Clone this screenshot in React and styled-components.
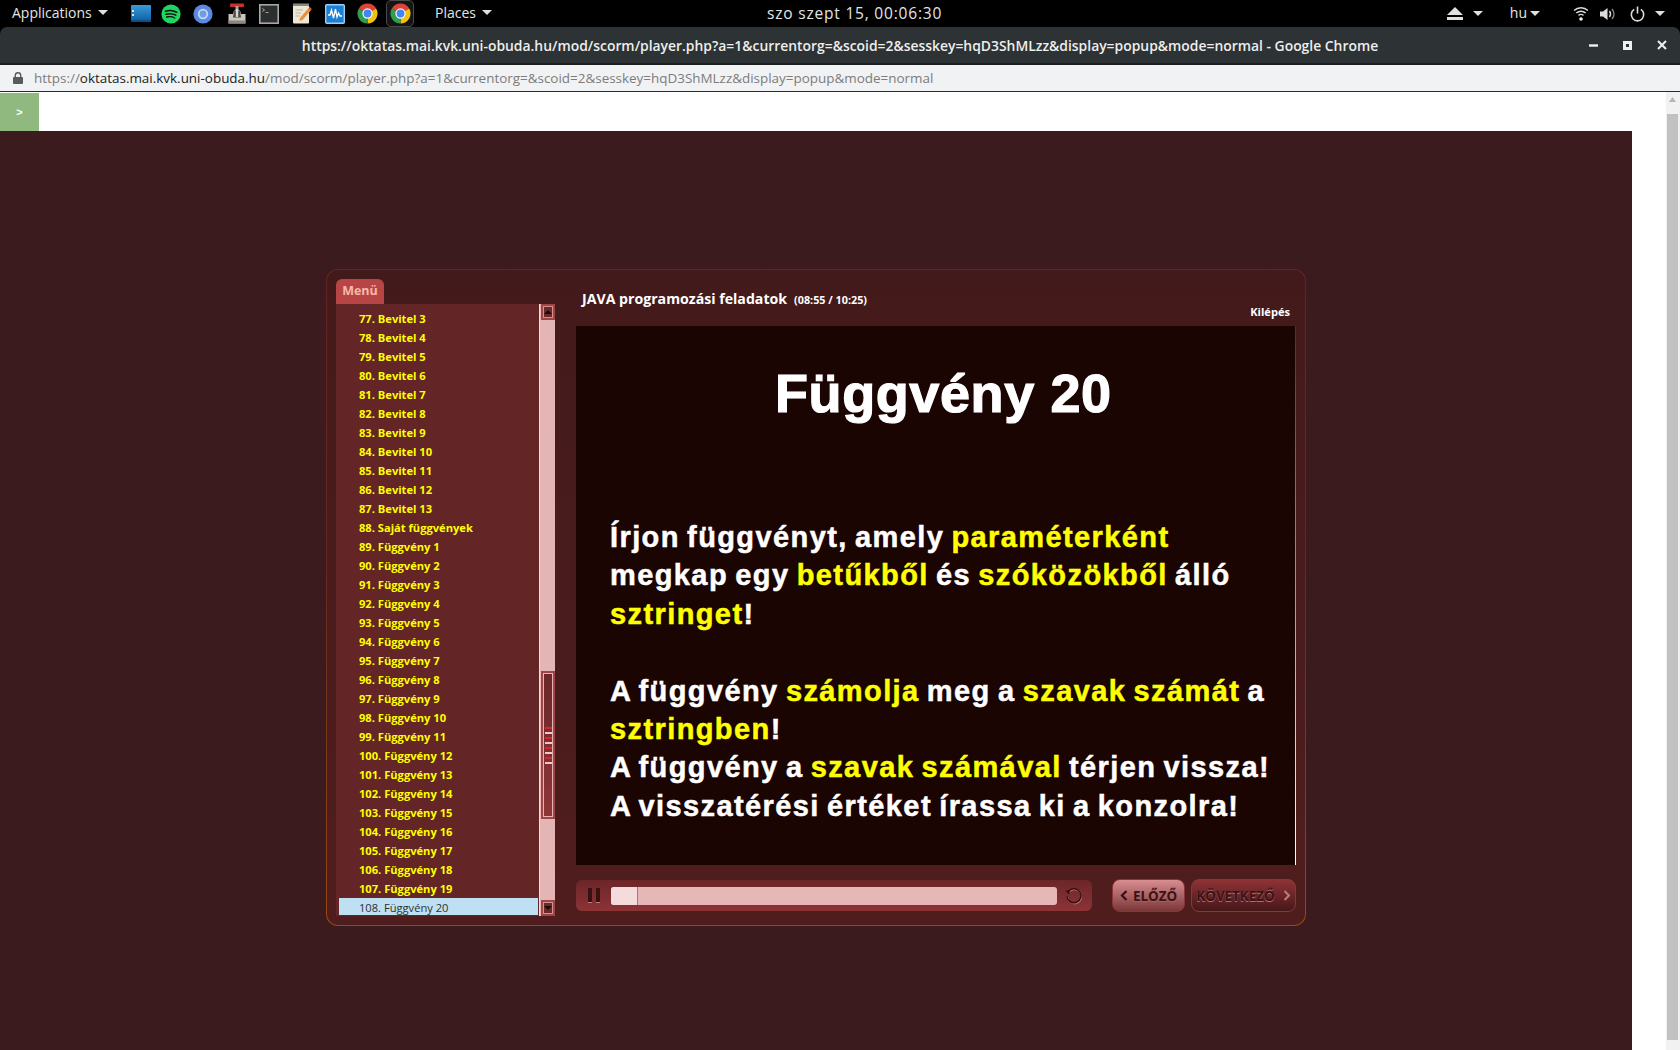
import styled, { createGlobalStyle } from "styled-components";

const GlobalStyle = createGlobalStyle`
    html, body {
        margin: 0;
        padding: 0;
        height: 100%;
        overflow: hidden;
        background: #ffffff;
    }
    * { box-sizing: border-box; }
`

const bevitel = Array.from({ length: 11 }, (_, i) => `${77 + i}. Bevitel ${3 + i}`)
const fuggveny = Array.from({ length: 19 }, (_, i) => `${89 + i}. Függvény ${1 + i}`)
const menuItems = [...bevitel, "88. Saját függvények", ...fuggveny]

function ChromeIcon() {
    return (
        <svg width="21" height="21" viewBox="0 0 20 20">
            <path d="M10 10 L1.77 5.25 A9.5 9.5 0 0 1 18.23 5.25 Z" fill="#db4437" />
            <path d="M10 10 L18.23 5.25 A9.5 9.5 0 0 1 10 19.5 Z" fill="#f4c20d" />
            <path d="M10 10 L10 19.5 A9.5 9.5 0 0 1 1.77 5.25 Z" fill="#2f9e4f" />
            <circle cx="10" cy="10" r="4.9" fill="#f4f4f4" />
            <circle cx="10" cy="10" r="3.7" fill="#4285f4" />
        </svg>
    )
}

function DockIcons() {
    return (
        <Dock>
            <DockSlot $w={30}>
                <svg width="20" height="17" viewBox="0 0 20 17">
                    <defs>
                        <linearGradient id="filesBlue" x1="0" y1="0" x2="0" y2="1">
                            <stop offset="0" stopColor="#3a9bdc" />
                            <stop offset="1" stopColor="#0f5c9e" />
                        </linearGradient>
                    </defs>
                    <rect width="20" height="17" rx="1" fill="url(#filesBlue)" />
                    <rect width="20" height="1" y="15.5" fill="#0b3f6d" />
                    <rect x="1" y="5" width="2" height="2" fill="#cfe8ff" />
                    <rect x="1" y="9" width="2" height="2" fill="#cfe8ff" />
                </svg>
            </DockSlot>
            <DockSlot $w={30}>
                <svg width="20" height="20" viewBox="0 0 20 20">
                    <circle cx="10" cy="10" r="9.6" fill="#1ed760" />
                    <path d="M4.5 7.2 C8 6.2 12.5 6.4 15.6 8.2" stroke="#101010" strokeWidth="1.7" fill="none" strokeLinecap="round" />
                    <path d="M5 10.2 C8.2 9.4 12 9.6 14.8 11.2" stroke="#101010" strokeWidth="1.5" fill="none" strokeLinecap="round" />
                    <path d="M5.6 13 C8.3 12.4 11.4 12.6 13.8 14" stroke="#101010" strokeWidth="1.3" fill="none" strokeLinecap="round" />
                </svg>
            </DockSlot>
            <DockSlot $w={34}>
                <svg width="20" height="20" viewBox="0 0 20 20">
                    <circle cx="10" cy="10" r="9.6" fill="#5b8be0" />
                    <circle cx="10" cy="10" r="5.2" fill="#c4d6f3" />
                    <circle cx="10" cy="10" r="3.4" fill="#6f9ce8" />
                </svg>
            </DockSlot>
            <DockSlot $w={33}>
                <svg width="20" height="21" viewBox="0 0 20 21">
                    <rect x="3" y="0.5" width="14" height="3.4" rx="1" fill="#c8302c" />
                    <rect x="8.5" y="3" width="3" height="6" fill="#a9a49b" />
                    <path d="M1.5 11 H6 L7 7.5 H13 L14 11 H18.5 V20.5 H1.5 Z" fill="#c9c5bd" />
                    <path d="M7 8 H13 L14 14.5 H6 Z" fill="#4a4643" />
                    <rect x="8.8" y="6" width="2.4" height="8" fill="#d9d5cd" />
                    <rect x="1.5" y="17.5" width="17" height="3" fill="#8b8780" />
                </svg>
            </DockSlot>
            <DockSlot $w={32}>
                <svg width="20" height="20" viewBox="0 0 20 20">
                    <rect x="0.8" y="0.8" width="18.4" height="18.4" fill="#2b2f30" stroke="#a5a8a6" strokeWidth="1.6" />
                    <path d="M3.5 4.5 L5.5 6 L3.5 7.5" stroke="#c8c8c8" strokeWidth="0.8" fill="none" />
                    <rect x="6.5" y="8" width="3" height="1" fill="#a0a0a0" />
                </svg>
            </DockSlot>
            <DockSlot $w={33}>
                <svg width="20" height="21" viewBox="0 0 20 21">
                    <rect x="1" y="1.5" width="16" height="19" rx="1" fill="#ece7d6" />
                    <rect x="1" y="0.5" width="16" height="2.5" fill="#8a8780" />
                    <path d="M3.5 7 H11 M3.5 10 H9 M3.5 13 H8" stroke="#bbb59f" strokeWidth="1" />
                    <path d="M8 15 L16.5 5 L19 7.2 L10.5 17 L7.5 18 Z" fill="#e8923a" />
                    <path d="M16.5 5 L19 7.2 L19.8 6 L17.6 3.8 Z" fill="#d25e4a" />
                </svg>
            </DockSlot>
            <DockSlot $w={33}>
                <svg width="20" height="20" viewBox="0 0 20 20">
                    <rect x="0.7" y="0.7" width="18.6" height="18.6" rx="1" fill="#1c7fd6" stroke="#9ad0f5" strokeWidth="1.4" />
                    <path d="M3 11 H5 L6.5 6 L8.5 14 L10.5 5 L12 13 L13.5 9 L15 12 H17" stroke="#ffffff" strokeWidth="1.3" fill="none" />
                </svg>
            </DockSlot>
            <DockSlot $w={33}>
                <ChromeIcon />
            </DockSlot>
            <ActiveSlot>
                <ChromeIcon />
            </ActiveSlot>
        </Dock>
    )
}

function App() {
    return (
        <Screen>
            <GlobalStyle />
            <TopBar>
                <MenuLabel>Applications<Caret /></MenuLabel>
                <DockIcons />
                <PlacesLabel>Places<Caret /></PlacesLabel>
                <Clock>szo szept 15, 00:06:30</Clock>
                <TrayGroup>
                    <svg width="16" height="13" viewBox="0 0 16 13">
                        <path d="M8 0 L16 8 H0 Z M0 10 H16 V13 H0 Z" fill="#e0e0e0" />
                    </svg>
                    <TrayCaret $left={10} />
                    <HuLabel>hu</HuLabel>
                    <TrayCaret $left={3} />
                    <TrayIcon $left={33}>
                        <svg width="16" height="15" viewBox="0 0 16 15">
                            <path d="M1 4.5 C5 0.8 11 0.8 15 4.5 M3.3 7 C6 4.6 10 4.6 12.7 7 M5.5 9.4 C7 8.2 9 8.2 10.5 9.4" stroke="#dcdcdc" strokeWidth="1.4" fill="none" />
                            <circle cx="8" cy="13" r="1.8" fill="#f0f0f0" />
                        </svg>
                    </TrayIcon>
                    <TrayIcon $left={11}>
                        <svg width="15" height="14" viewBox="0 0 15 14">
                            <path d="M0 4.5 H3 L7.5 1 V13 L3 9.5 H0 Z" fill="#dcdcdc" />
                            <path d="M9.5 4 C10.8 5.8 10.8 8.2 9.5 10" stroke="#dcdcdc" strokeWidth="1.4" fill="none" />
                            <path d="M12 2 C14.4 5 14.4 9 12 12" stroke="#8a8a8a" strokeWidth="1.3" fill="none" />
                        </svg>
                    </TrayIcon>
                    <TrayIcon $left={15}>
                        <svg width="15" height="16" viewBox="0 0 15 16">
                            <path d="M4.2 3.4 A6.2 6.2 0 1 0 10.8 3.4" stroke="#dcdcdc" strokeWidth="1.6" fill="none" />
                            <path d="M7.5 0.5 V7.5" stroke="#dcdcdc" strokeWidth="1.6" />
                        </svg>
                    </TrayIcon>
                    <TrayCaret $left={10} />
                </TrayGroup>
            </TopBar>

            <TitleBar>
                <span />
                <WindowTitle>https://oktatas.mai.kvk.uni-obuda.hu/mod/scorm/player.php?a=1&amp;currentorg=&amp;scoid=2&amp;sesskey=hqD3ShMLzz&amp;display=popup&amp;mode=normal - Google Chrome</WindowTitle>
                <WindowButtons>
                    <svg width="9" height="3" viewBox="0 0 9 3"><rect width="9" height="2.4" y="0.3" fill="#f0f0f0" /></svg>
                    <svg width="9" height="9" viewBox="0 0 9 9"><path fillRule="evenodd" d="M0 0 H9 V9 H0 Z M3 3 V6 H6 V3 Z" fill="#f0f0f0" /></svg>
                    <svg width="10" height="10" viewBox="0 0 10 10"><path d="M1 1 L9 9 M9 1 L1 9" stroke="#f0f0f0" strokeWidth="2" /></svg>
                </WindowButtons>
            </TitleBar>

            <AddressBar>
                <svg width="10" height="12" viewBox="0 0 10 12">
                    <rect y="5" width="10" height="7" rx="1" fill="#5a5a5a" />
                    <path d="M2.3 5.5 V3.4 A2.7 2.7 0 0 1 7.7 3.4 V5.5" stroke="#5a5a5a" strokeWidth="1.4" fill="none" />
                </svg>
                <UrlText>
                    https://<UrlHost>oktatas.mai.kvk.uni-obuda.hu</UrlHost>/mod/scorm/player.php?a=1&amp;currentorg=&amp;scoid=2&amp;sesskey=hqD3ShMLzz&amp;display=popup&amp;mode=normal
                </UrlText>
            </AddressBar>

            <Page>
                <PageColumn>
                    <ToggleRow>
                        <ToggleButton>&gt;</ToggleButton>
                    </ToggleRow>
                    <Stage>
                        <Player>
                            <Sidebar>
                                <MenuTab>Menü</MenuTab>
                                <MenuBody>
                                    <MenuList>
                                        {menuItems.map((item) => <MenuRow key={item}>{item}</MenuRow>)}
                                        <MenuRow $active>108. Függvény 20</MenuRow>
                                    </MenuList>
                                    <ListScroll>
                                        <ScrollButton>
                                            <svg width="8" height="4" viewBox="0 0 8 4"><path d="M4 0 L8 4 H0 Z" fill="#200809" /></svg>
                                        </ScrollButton>
                                        <ScrollThumb>
                                            {[0, 1, 2, 3, 4, 5, 6, 7].map((n) => <Grip key={n} $even={n % 2 === 0} />)}
                                        </ScrollThumb>
                                        <ScrollButton $bottom>
                                            <svg width="8" height="4" viewBox="0 0 8 4"><path d="M0 0 H8 L4 4 Z" fill="#200809" /></svg>
                                        </ScrollButton>
                                    </ListScroll>
                                </MenuBody>
                            </Sidebar>

                            <MainColumn>
                                <PlayerHeader>
                                    <CourseTitle>JAVA programozási feladatok<Duration>(08:55 / 10:25)</Duration></CourseTitle>
                                    <ExitLink>Kilépés</ExitLink>
                                </PlayerHeader>

                                <Slide>
                                    <SlideTitle>Függvény 20</SlideTitle>
                                    <SlideText>
                                        Írjon függvényt, amely <Mark>paraméterként</Mark><br />
                                        megkap egy <Mark>betűkből</Mark> és <Mark>szóközökből</Mark> álló<br />
                                        <Mark>sztringet</Mark>!<br />
                                        <br />
                                        A függvény <Mark>számolja</Mark> meg a <Mark>szavak számát</Mark> a<br />
                                        <Mark>sztringben</Mark>!<br />
                                        A függvény a <Mark>szavak számával</Mark> térjen vissza!<br />
                                        A visszatérési értéket írassa ki a konzolra!
                                    </SlideText>
                                </Slide>

                                <Controls>
                                    <ControlBar>
                                        <PauseIcon><PauseBar /><PauseBar /></PauseIcon>
                                        <Track><TrackFill $percent={6} /></Track>
                                        <svg width="20" height="20" viewBox="0 0 20 20">
                                            <path d="M4.6 5.2 A7 7 0 1 1 3 10.5" stroke="#c9797b" strokeWidth="1.6" fill="none" transform="translate(0.5 0.7)" />
                                            <path d="M4.6 5.2 A7 7 0 1 1 3 10.5" stroke="#35100f" strokeWidth="1.6" fill="none" />
                                            <path d="M1.5 4.6 L6.4 4.4 L4.6 8.4 Z" fill="#35100f" />
                                        </svg>
                                    </ControlBar>
                                    <NavButton $width={73} $gap={5} $light>
                                        <svg width="8" height="11" viewBox="0 0 8 11"><path d="M6.5 1 L2 5.5 L6.5 10" stroke="#3a1113" strokeWidth="2.2" fill="none" /></svg>
                                        <NavLabel $light>ELŐZŐ</NavLabel>
                                    </NavButton>
                                    <NavButton $width={105} $gap={8}>
                                        <NavLabel>KÖVETKEZŐ</NavLabel>
                                        <svg width="8" height="11" viewBox="0 0 8 11"><path d="M1.5 1 L6 5.5 L1.5 10" stroke="#c07a7c" strokeWidth="2" fill="none" /></svg>
                                    </NavButton>
                                </Controls>
                            </MainColumn>
                        </Player>
                    </Stage>
                </PageColumn>
                <PageScrollbar>
                    <svg width="7" height="5" viewBox="0 0 7 5"><path d="M3.5 0 L7 5 H0 Z" fill="#b5b5b5" /></svg>
                    <PageScrollThumb />
                </PageScrollbar>
            </Page>
        </Screen>
    )
}

export default App

const sans = `"Open Sans", "Noto Sans", sans-serif`
const arial = `"Liberation Sans", Arial, sans-serif`

const Screen = styled.div`
    width: 1680px;
    height: 1050px;
    display: flex;
    flex-direction: column;
    overflow: hidden;
    background: #000000;
    font-family: ${sans};
`

const TopBar = styled.div`
    height: 27px;
    flex: none;
    display: flex;
    align-items: center;
    padding-left: 12px;
    background: #000000;
    color: #e4e4e4;
    font-size: 14px;
`

const MenuLabel = styled.div`
    width: 114px;
    margin-top: -2px;
    display: flex;
    align-items: center;
    white-space: nowrap;
`

const PlacesLabel = styled(MenuLabel)`
    width: 74px;
    margin-left: 21px;
`

const Caret = styled.span`
    margin-left: 6px;
    border-left: 5px solid transparent;
    border-right: 5px solid transparent;
    border-top: 5px solid #e0e0e0;
`

const Dock = styled.div`
    display: flex;
    align-items: center;
    height: 27px;
`

const DockSlot = styled.div`
    width: ${props => props.$w}px;
    height: 27px;
    display: flex;
    align-items: center;
    justify-content: center;
`

const ActiveSlot = styled.div`
    width: 28px;
    height: 27px;
    margin-left: 2px;
    display: flex;
    align-items: center;
    justify-content: center;
    background: #151515;
    border: 1px solid #4a4a4a;
    border-radius: 5px;
`

const Clock = styled.div`
    margin-left: 258px;
    margin-top: -2px;
    font-size: 15.5px;
    letter-spacing: 0.8px;
    white-space: nowrap;
`

const TrayGroup = styled.div`
    margin-left: auto;
    padding-right: 15px;
    display: flex;
    align-items: center;
`

const TrayCaret = styled(Caret)`
    margin-left: ${props => props.$left}px;
`

const HuLabel = styled.span`
    margin-left: 27px;
    margin-top: -2px;
    font-size: 14px;
`

const TrayIcon = styled.span`
    margin-left: ${props => props.$left}px;
    display: flex;
`

const TitleBar = styled.div`
    height: 37px;
    flex: none;
    display: grid;
    grid-template-columns: 1fr auto 1fr;
    align-items: center;
    background: #2d3235;
    border-radius: 7px 7px 0 0;
    border-bottom: 1px solid #1c1f20;
`

const WindowTitle = styled.div`
    color: #eeeeec;
    font-size: 13.9px;
    font-weight: 600;
    white-space: nowrap;
`

const WindowButtons = styled.div`
    display: flex;
    justify-content: flex-end;
    align-items: center;
    gap: 25px;
    padding-right: 13px;
`

const AddressBar = styled.div`
    height: 28px;
    flex: none;
    display: flex;
    align-items: center;
    gap: 11px;
    padding-left: 13px;
    background: #f1f2f4;
    border-top: 1px solid #1c1f20;
    border-bottom: 1px solid #2a2a2a;
`

const UrlText = styled.div`
    font-size: 13.45px;
    color: #7c7c7c;
    white-space: nowrap;
`

const UrlHost = styled.span`
    color: #222222;
`

const Page = styled.div`
    flex: 1;
    display: flex;
    background: #ffffff;
    min-height: 0;
`

const PageColumn = styled.div`
    width: 1632px;
    display: flex;
    flex-direction: column;
`

const ToggleRow = styled.div`
    height: 39px;
    flex: none;
    padding-top: 1px;
    background: #ffffff;
`

const ToggleButton = styled.div`
    width: 39px;
    height: 38px;
    display: flex;
    align-items: center;
    justify-content: center;
    background: #8fb97e;
    color: #ffffff;
    font-family: ${arial};
    font-size: 11px;
    font-weight: 700;
`

const Stage = styled.div`
    flex: 1;
    padding: 138px 0 0 326px;
    background: #3b1b1e;
`

const Player = styled.div`
    width: 980px;
    height: 657px;
    display: flex;
    gap: 21px;
    padding: 9px 9px 0 9px;
    border: 1px solid transparent;
    border-radius: 12px;
    background:
        linear-gradient(#431a1b, #501d1e) padding-box,
        linear-gradient(#672324, #6b2a1c 50%, #9a4a10) border-box;
`

const Sidebar = styled.div`
    width: 219px;
    flex: none;
    display: flex;
    flex-direction: column;
`

const MenuTab = styled.div`
    width: 48px;
    height: 25px;
    padding-bottom: 2px;
    display: flex;
    align-items: center;
    justify-content: center;
    background: #b74546;
    border-radius: 6px 6px 0 0;
    color: #f8b9a8;
    font-size: 12.5px;
    font-weight: 700;
`

const MenuBody = styled.div`
    height: 612px;
    display: flex;
`

const MenuList = styled.div`
    width: 203px;
    padding: 5px 0 0 3px;
    background: #642527;
`

const MenuRow = styled.div`
    width: 199px;
    height: 17px;
    margin-bottom: 2px;
    padding: 1px 0 0 20px;
    display: flex;
    align-items: center;
    background: ${props => props.$active ? "#bfe0f2" : "transparent"};
    color: ${props => props.$active ? "#2e2e2e" : "#ffff00"};
    font-size: 11.15px;
    font-weight: ${props => props.$active ? 400 : 700};
    white-space: nowrap;
`

const ListScroll = styled.div`
    width: 16px;
    display: flex;
    flex-direction: column;
    padding-left: 1px;
    background: #e3b5b5;
    border-left: 1px solid #f3dede;
`

const ScrollButton = styled.div`
    height: 16px;
    flex: none;
    margin-top: ${props => props.$bottom ? "auto" : "0"};
    display: flex;
    align-items: center;
    justify-content: center;
    background: #6a2a2c;
    border: 2px solid #a04446;
    box-shadow: inset 0 0 0 1px #d29292;
`

const ScrollThumb = styled.div`
    height: 148px;
    margin-top: 351px;
    flex: none;
    display: flex;
    flex-direction: column;
    align-items: center;
    justify-content: center;
    gap: 3px;
    background: linear-gradient(#6a2729, #8e3538);
    border: 2px solid #a04446;
    box-shadow: inset 0 0 0 1px #e3b5b5;
`

const Grip = styled.div`
    width: 7px;
    height: 2px;
    flex: none;
    background: ${props => props.$even ? "#d8262e" : "#f0c8c8"};
`

const MainColumn = styled.div`
    width: 720px;
    flex: none;
    display: flex;
    flex-direction: column;
`

const PlayerHeader = styled.div`
    height: 47px;
    flex: none;
    display: flex;
    flex-direction: column;
    padding: 10px 6px 0 6px;
    color: #ffffff;
`

const CourseTitle = styled.div`
    font-size: 14.15px;
    font-weight: 700;
    white-space: nowrap;
`

const Duration = styled.span`
    margin-left: 7px;
    font-size: 10.8px;
`

const ExitLink = styled.div`
    align-self: flex-end;
    margin-top: -4px;
    font-size: 11.1px;
    font-weight: 700;
`

const Slide = styled.div`
    height: 539px;
    flex: none;
    padding-left: 34px;
    background: #1b0503;
    border-right: 1px solid;
    border-image: linear-gradient(#5a2a2a, #ffffff) 1;
    font-family: ${arial};
    font-weight: 700;
    white-space: nowrap;
`

const SlideTitle = styled.div`
    margin-top: 33px;
    padding-left: 165px;
    color: #ffffff;
    font-size: 54px;
    line-height: 68px;
    letter-spacing: 0.6px;
    -webkit-text-stroke: 1.2px currentColor;
`

const SlideText = styled.div`
    margin-top: 91px;
    color: #ffffff;
    font-size: 29px;
    line-height: 38.4px;
    letter-spacing: 1.4px;
    word-spacing: -2.2px;
    -webkit-text-stroke: 0.5px currentColor;
`

const Mark = styled.span`
    color: #ffff00;
`

const Controls = styled.div`
    margin-top: 14px;
    display: flex;
    align-items: flex-start;
    gap: 6px;
`

const ControlBar = styled.div`
    width: 516px;
    height: 31px;
    margin-top: 1px;
    margin-right: 14px;
    display: flex;
    align-items: center;
    padding-left: 12px;
    background: linear-gradient(#6c2628, #8d3337);
    border-radius: 6px;
`

const PauseIcon = styled.div`
    width: 12px;
    height: 15px;
    display: flex;
    justify-content: space-between;
    margin-right: 11px;
`

const PauseBar = styled.div`
    width: 4px;
    background: #3a1113;
    border-bottom: 1px solid #c27f80;
`

const Track = styled.div`
    width: 446px;
    height: 18px;
    margin-right: 7px;
    background: #e5b7b7;
    border-radius: 3px;
    overflow: hidden;
`

const TrackFill = styled.div`
    width: ${props => props.$percent}%;
    height: 100%;
    background: #f5dcdc;
    border-right: 1px solid #b86f70;
`

const NavButton = styled.div`
    width: ${props => props.$width}px;
    height: 33px;
    display: flex;
    align-items: center;
    justify-content: center;
    gap: ${props => props.$gap}px;
    background: ${props => props.$light
        ? "linear-gradient(#d98e90, #7c3739)"
        : "linear-gradient(#8e3336, #471719)"};
    border: 1px solid #8a3538;
    border-radius: 8px;
`

const NavLabel = styled.span`
    color: #3a1315;
    font-family: ${sans};
    font-size: 13.4px;
    font-weight: 700;
    text-shadow: ${props => props.$light ? "0 1px 0 #a95f61" : "0 1px 0 #b96a6c"};
`

const PageScrollbar = styled.div`
    flex: 1;
    padding: 5px 2px 0 35px;
    display: flex;
    flex-direction: column;
    align-items: center;
    background: linear-gradient(90deg, #ffffff 34px, #f1f1f1 34px);
`

const PageScrollThumb = styled.div`
    width: 11px;
    flex: 1;
    margin: 12px 0 10px;
    background: #c1c1c1;
`
